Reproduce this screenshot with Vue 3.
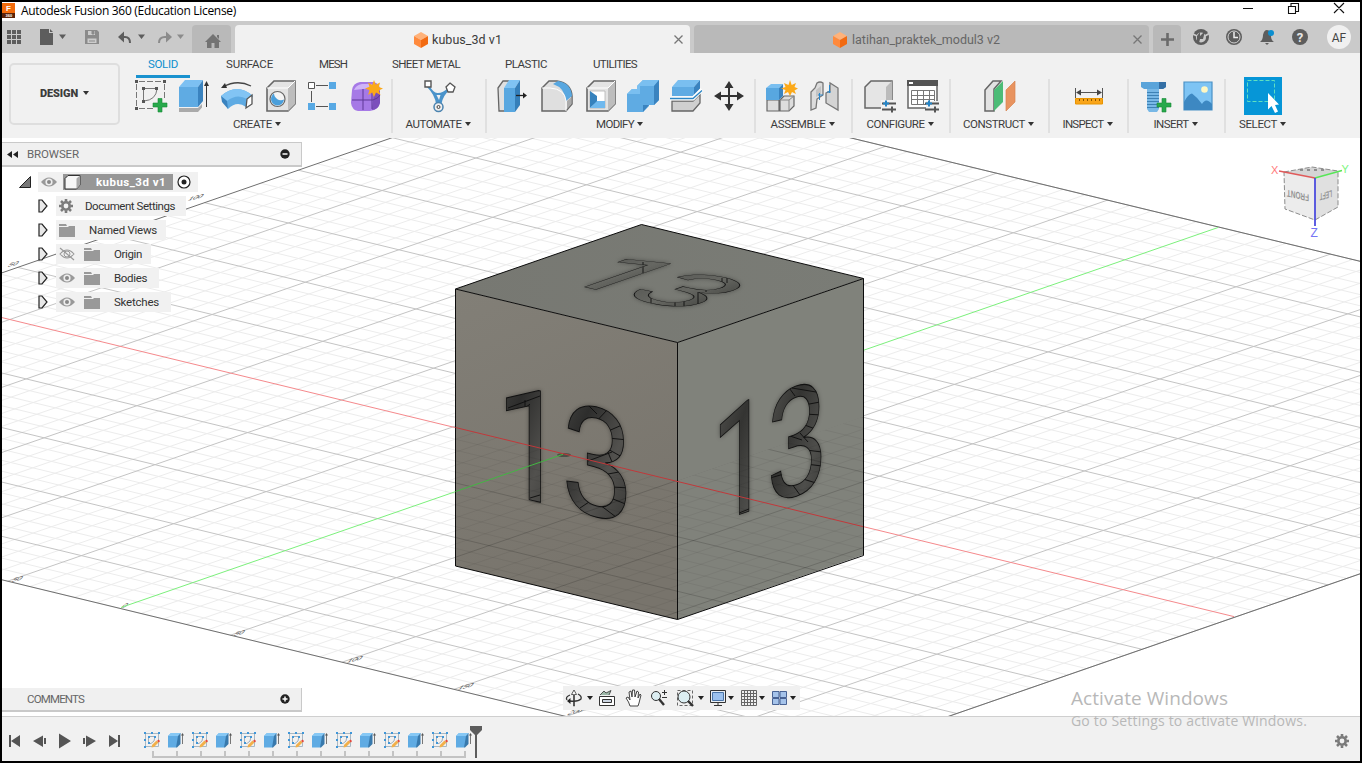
<script setup>
// v-fit="w" tracks the letters of a label so that it is w pixels wide.
const vFit = {
  mounted(el, { value }) {
    const w = el.getBoundingClientRect().width
    el.style.letterSpacing = (value - w) / el.textContent.length + 'px'
  },
}

const box = '<path d="M3 8 10 1H31V24L24 31H3z" fill="#e3e3e3" stroke="#666" stroke-width="1.6"/><path d="M24 8V31L31 24V1z" fill="#bdbdbd"/><path d="M3 8H24L31 1" fill="none" stroke="#fff"/>'
const icons = {
  sketch: '<g fill="none" stroke="#777"><path d="M4 1.500H28M1.500 4V27M4 28.500H19M29.500 4V18" stroke-dasharray="6 2"/><path d="M8.500 9V21M9 8.500H22M22 9Q21 20 9 21"/></g><path d="M0 0h3v3H0zM28 0h3v3h-3zM0 27h3v3H0zM7 7h3v3H7zM20 7h3v3h-3zM7 20h3v3H7z" fill="#555"/><path d="M23 18.500h4V23h5v4h-5v5h-4v-5h-5v-4h5z" fill="#27a94b" stroke="#178a38" stroke-width=".6"/>',
  extrude: '<path d="M1 28H20l4-4v3.500L20 32H1z" fill="#aaa"/><path d="M1 7 7 0H25L20 7z" fill="#7cc0f2"/><path d="M1 7H20V27H1z" fill="#5fabe3"/><path d="M20 7 25 0V21L20 27z" fill="#3a83bf"/><path d="M28.500 4V27" stroke="#333"/><path d="M26 6 28.500 1l2.500 5z" fill="#333"/>',
  revolve: '<path d="M2 7Q16-1 30 6" fill="none" stroke="#444" stroke-width="1.3"/><path d="M0 8 4 3l2 5z" fill="#333"/><path d="M0 16Q16 2 32 16L25 27Q16 20 7 29z" fill="#5fabe3"/><path d="M0 16Q16 2 32 16L26 19Q16 13 6 21z" fill="#82c4f4"/><path d="M0 16 6 21 7 29 1 22z" fill="#3a83bf"/><path d="M26 19 31 15V24L25 28z" fill="#fff" stroke="#555" stroke-width="1.3"/>',
  hole: box + '<circle cx="13.500" cy="19" r="7.500" fill="#f4f4f4" stroke="#666" stroke-width="1.2"/><path d="M10 13.500A6.500 6.500 0 1 0 20 19.500 7 7 0 0 1 10 13.500" fill="#4a9fdb"/>',
  pattern: '<path d="M9 5.500H21M4.500 11V22M9 26.500H21" stroke="#555"/><path d="M1.500 2.500h6v6h-6z" fill="#fff" stroke="#555"/><path d="M22 2h7v7h-7zM1 23h7v7H1zM22 23h7v7h-7z" fill="#58a9e4"/>',
  form: '<path d="M2 10Q3 3 10 2H23Q30 3 30 10V22Q29 30 20 31H8Q2 30 1 23z" fill="#a679e6"/><path d="M4 10Q6 5 12 4H22Q20 9 13 9z" fill="#cfb4f8"/><path d="M24 12Q30 9 30 12V23Q28 30 22 30z" fill="#7c4ebc"/><path d="M13 9V30M2 20H23Q29 18 30 15M22 9V29" fill="none" stroke="#5e3897"/><path d="M24 0l1.800 4.800L30 2.500 28.800 7 33 8.500 28.800 10.500 30.500 15 26 12.500 24 17l-1.800-4.500L18 15l1.500-4.700L15 8.500l4.500-1.700L18 2.500 22.200 5z" fill="#fba919"/>',
  automate: '<path d="M6 5Q11 14 15 13 20 13 25 8L27 10Q20 15 18.500 24H13Q12 15 4 7z" fill="#4a93ca"/><path d="M13.500 15h4L16 20z" fill="#f1f1f1"/><circle cx="15.500" cy="27" r="4.500" fill="#eee" stroke="#4a83af" stroke-width="1.500"/><circle cx="15.500" cy="27" r="1.500" fill="none" stroke="#444"/><path d="M2 1h6v6H2z" fill="#fff" stroke="#555" stroke-width="1.400"/><path d="m27 3 5 4-2 5h-5l-2-5z" fill="#fff" stroke="#555" stroke-width="1.300"/>',
  presspull: '<path d="M0 8 5 1h6V31H1z" fill="#e0e0e0" stroke="#666" stroke-width="1.300"/><path d="M6 8 11 0H22L17 8z" fill="#7fc3f3"/><path d="M6 8H17V32H6z" fill="#58a7e0"/><path d="M17 8 22 0V25L17 32z" fill="#357fb9"/><path d="M18 15.500H26" stroke="#222" stroke-width="1.300"/><path d="M25 12.500 29 15.500 25 18.500z" fill="#222"/>',
  fillet: '<path d="M1 8 8 1H16Q30 3 31 16V24L25 31H1z" fill="#dfdfdf" stroke="#666" stroke-width="1.500"/><path d="M12 4 17 1Q30 3 31 16L25 21Q24 8 12 4z" fill="#58a7e0"/><path d="M1 8H9Q24 9 25 21V31" fill="none" stroke="#fff"/><path d="M26 21 30.500 17v7L26 29z" fill="#aaa"/>',
  shell: box + '<path d="M6 11H21V28H6z" fill="#fff" stroke="#aaa" stroke-width=".7"/><path d="M6 11 13 16V22L6 28z" fill="#3682bd"/><path d="M6 28 13 21H21V28z" fill="#70b9ee"/>',
  combine: '<path d="M0 14 5 9H10V6L16 0H32V20L27 25H22V26L16 32H0z" fill="#5fabe3"/><path d="M0 14 5 9H10V6L16 0H32L27 6H13V14z" fill="#7abff0"/><path d="M27 6 32 0V20L27 25zM16 25H22L16 32z" fill="#3a83bf"/>',
  split: '<path d="M2 21H23L30 14V23L23 31H2z" fill="#cfcfcf" stroke="#666" stroke-width="1.300"/><path d="M2 7 8 0H30L24 7z" fill="#7abff0"/><path d="M2 7H24V16H2z" fill="#5fabe3"/><path d="M24 7 30 0V9L24 16z" fill="#3a83bf"/><path d="M0 18.500H23L32 9.500" fill="none" stroke="#fff" stroke-width="4"/><path d="M0 18.500H23L32 10.500" fill="none" stroke="#2c86c4" stroke-width="1.300"/>',
  move: '<path d="M16 5V27M5 16H27" stroke="#333" stroke-width="2"/><path d="M11.500 8 16 1 20.500 8zM11.500 24 16 31 20.500 24zM8 11.500 1 16 8 20.500zM24 11.500 31 16 24 20.500z" fill="#333"/>',
  assemble: '<path d="M1 20H13V31H1zM14 20 18 16H28V26L23 31H14z" fill="#ddd" stroke="#666" stroke-width="1.200"/><path d="M14 20H23V31M23 20 28 16" stroke="#888" fill="none"/><path d="M0 8 5 4H17L13 8z" fill="#7abff0"/><path d="M0 8H13V20H0z" fill="#58a7e0"/><path d="M13 8 17 4V16L13 20z" fill="#3a83bf"/><path d="M24 0l1.700 5L30 3 28.500 7 32 8.500 28.500 10.500 30 14 26 12 24 16 22 12 18 14 19.500 10 15 8.500 19.500 7 18 3 22.500 5z" fill="#fba919"/>',
  joint: '<path d="M2 12 6 8 8 3Q11 1 14 3V15L8 19 7 28 2 30z" fill="#dcdcdc" stroke="#777" stroke-width="1.300"/><path d="M7 10 12 6V14L7 17z" fill="#c4c4c4"/><path d="M17 13 21 11V3L29 8V30L17 23z" fill="#d4d4d4" stroke="#777" stroke-width="1.300"/><path d="M10.500 13V20M9 15h5M20.500 5V13M18 12h4" stroke="#2a86c9"/>',
  configure: '<path d="M1 7 7 1H28V22L22 28H1z" fill="#e5e5e5" stroke="#666" stroke-width="1.500"/><path d="M22 7 28 1V22L22 28z" fill="#bbb"/><path d="M17 20H33V33H17z" fill="#f1f1f1"/><path d="M18 23.500H32M18 29.500H32" stroke="#555" stroke-width="2"/><path d="M22 20.500v6M19 23.500h6" stroke="#2585c7" stroke-width="2"/><path d="M28 26.500v6" stroke="#555" stroke-width="2"/>',
  table: '<path d="M1 1H30V28H1z" fill="#fff" stroke="#666" stroke-width="1.500"/><path d="M0 0H31V6H0z" fill="#555"/><path d="M2 2h4v2H2z" fill="#fff"/><path d="M4.500 10.500H27.500V24.500H4.500zM4.500 15.500H27M4.500 19.500H27M10.500 10V24M16.500 10V24M22.500 10V24" fill="none" stroke="#777"/><path d="M19 21H33V33H19z" fill="#f1f1f1"/><path d="M18 23.500H32M18 29.500H32" stroke="#555" stroke-width="2"/><path d="M22 20.500v6M19 23.500h6" stroke="#2585c7" stroke-width="2"/><path d="M28 26.500v6" stroke="#555" stroke-width="2"/>',
  construct: '<path d="M1 10 9 1H17L10 9V31H1z" fill="#e2e2e2" stroke="#666" stroke-width="1.500"/><path d="M10 10 19 1V22L10 31z" fill="#4cbc77"/><path d="M22 10 31 1V22L22 31z" fill="#e8935f" stroke="#d98451" stroke-width=".7"/>',
  measure: '<path d="M2.500 8V18M29.500 8V18M4 12.500H28" stroke="#555"/><path d="M3 12.500 8 9.500V15.500zM29 12.500 24 9.500V15.500z" fill="#444"/><path d="M2.500 18.500H29.500V24H2.500z" fill="#f9a51a" stroke="#e89400"/><path d="M6.500 19v2M10.500 19v2M14.500 19v2M18.500 19v2M22.500 19v2M26.500 19v2" stroke="#8a5600"/>',
  bolt: '<path d="M8 8H20V29L18 32H10L8 29z" fill="#78b8e6"/><path d="M8 12.500H20M8 15.500H20M8 18.500H20M8 21.500H20M8 24.500H20M8 27.500H20" stroke="#3e82b5"/><path d="M2 2H27V7L24 9H5L2 7z" fill="#5aa4da"/><path d="M20 2H27V7L24 9H20z" fill="#346fa5"/><path d="M23 18.500h4V23h5v4h-5v5h-4v-5h-5v-4h5z" fill="#27a94b" stroke="#178a38" stroke-width=".6"/>',
  picture: '<path d="M2 2H30V30H2z" fill="#7ec4f4" stroke="#4a91c6" stroke-width="1.200"/><path d="M2 22Q6 14 10 13.500 15 17 20 24 24 17 30 24V30H2z" fill="#3d88c2"/><circle cx="22.500" cy="9.500" r="3.300" fill="#fff7c2"/>',
  select: '<path d="M0 0H38V38H0z" fill="#0696d7"/><path d="M3.500 3.500H30.500V24.500H3.500z" fill="none" stroke="#5fe0c0" stroke-dasharray="4 2"/><path d="M24 16V32.500L27.500 29 31 36 34 34.500 31 28 35 27.500z" fill="#fff"/>',
  tlsketch: '<path d="M1.500 1.500H14.500V14.500H1.500z" fill="none" stroke="#a9b8c3"/><path d="M4.500 4.500V11.500H7Q11 10 11 4.500z" fill="none" stroke="#8d9dab" stroke-width=".8"/><path d="M0 0h2v2H0zM14 0h2v2h-2zM0 14h2v2H0zM7 0h2v2H7zM0 7h2v2H0zM4 4h2v2H4zM10 4h2v2h-2zM4 10h2v2H4z" fill="#3f96d8"/><path d="m8 13 4.500-4.500 2 2L10 15l-2.500.5z" fill="#f2b04a"/><path d="m13 9 1.500-1.500L16 9l-1 1.500z" fill="#e5463a"/>',
  tlextrude: '<path d="M0 4 3 1H12L10 4V13L8 15.500H0z" fill="#5fabe3"/><path d="M0 4 3 1H13L10 4z" fill="#86c8f5"/><path d="M10 4 12.500 1V12L9 15.500H8z" fill="#3879ac"/><path d="M14.500 3V12" stroke="#777"/><path d="M13 3.500 14.500 1 16 3.500z" fill="#555"/>',
  eye: '<path d="M0 8Q8-1 16 8 8 17 0 8z" fill="#999"/><circle cx="8" cy="8" r="3.600" fill="#eee"/><circle cx="8" cy="8" r="2" fill="#888"/>',
  eyeoff: '<path d="M1 8Q8 0 15 8 8 16 1 8z" fill="none" stroke="#999" stroke-width="1.100"/><circle cx="8" cy="8" r="3" fill="none" stroke="#999"/><path d="M1 2 15 14" stroke="#999" stroke-width="1.200"/>',
  folder: '<path d="M0 2H7L8 4H0zM0 5H9L10 4H16V15H0z" fill="#999"/>',
  gear: '<circle cx="8" cy="8" r="3.700" fill="none" stroke="#7b7b7b" stroke-width="2.600"/><path d="M8 1V3.500M8 12.500V15M1 8H3.500M12.500 8H15M3 3 4.800 4.800M11.200 11.200 13 13M3 13 4.800 11.200M11.200 4.800 13 3" stroke="#7b7b7b" stroke-width="2.600"/>',
  cube: '<path d="M7 0 14 4 7 8 0 4z" fill="#ffb27a"/><path d="M0 4 7 8V16L0 12z" fill="#ff8a3d"/><path d="M14 4 7 8V16L14 12z" fill="#f26a11"/>',
}

const groups = [
  { name: 'CREATE', w: 268, t: 39, items: ['sketch', 'extrude', 'revolve', 'hole', 'pattern', 'form'] },
  { name: 'AUTOMATE', w: 94, t: 56, items: ['automate'] },
  { name: 'MODIFY', w: 269, t: 38, items: ['presspull', 'fillet', 'shell', 'combine', 'split', 'move'] },
  { name: 'ASSEMBLE', w: 97, t: 55, items: ['assemble', 'joint'] },
  { name: 'CONFIGURE', w: 98, t: 58, items: ['configure', 'table'] },
  { name: 'CONSTRUCT', w: 99, t: 62, items: ['construct'] },
  { name: 'INSPECT', w: 79, t: 41, items: ['measure'] },
  { name: 'INSERT', w: 97, t: 35, items: ['bolt', 'picture'] },
  { name: 'SELECT', w: 75, t: 38, items: ['select'] },
]
const modes = [['SOLID', 30], ['SURFACE', 47], ['MESH', 28], ['SHEET METAL', 68], ['PLASTIC', 42], ['UTILITIES', 44]]
const tree = [
  { label: 'Document Settings', icon: ['gear'], t: 90, w: 130, pad: 10 },
  { label: 'Named Views', icon: ['folder'], t: 68, w: 110, pad: 14 },
  { label: 'Origin', icon: ['eyeoff', 'folder'], t: 28, w: 95, pad: 14 },
  { label: 'Bodies', icon: ['eye', 'folder'], t: 33, w: 103, pad: 14 },
  { label: 'Sketches', icon: ['eye', 'folder'], t: 45, w: 115, pad: 14 },
]

// Ground grid: a runs along the red axis, b along the green one.
const pt = (a, b) => {
  const r = 111.4 * a + 0.1 * a * a
  const g = 93 * b + 0.1 * b * b
  return [563 + r + g, 454.3 + 0.2423 * r - 0.3464 * g]
}
const seg = (p, q) => `M${p[0].toFixed(1)} ${p[1].toFixed(1)}L${q[0].toFixed(1)} ${q[1].toFixed(1)}`
const A0 = -5.76, A1 = 6, B0 = -4.8, B1 = 7
let minor = '', major = ''
for (let i = -28; i <= 30; i++) {
  const s = seg(pt(i / 5, B0), pt(i / 5, B1))
  if (i % 5) minor += s
  else if (i) major += s
}
for (let i = -24; i <= 35; i++) {
  const s = seg(pt(A0, i / 5), pt(A1, i / 5))
  if (i % 5) minor += s
  else if (i) major += s
}
const border = [pt(A0, B0), pt(A1, B0), pt(A1, B1), pt(A0, B1)].map(p => p.join()).join(' ')
const marks = [[11, 582, '50'], [121, 608, '0'], [233, 636, '50'], [346, 663, '100'], [457, 690, '150'], [567, 715, '200'], [7, 267, '50'], [187, 201, '100']]
const faces = [
  { id: 'l', m1: 'matrix(.8 .191 0 1 492.500 491)', fill: 'url(#gl)', x: 4.5 },
  { id: 'r', m1: 'matrix(.673 -.2315 0 1 708.600 525)', fill: 'url(#gr)', x: 4.5 },
  { id: 't', m1: 'matrix(.8 .191 -.67 .232 547.500 278)', fill: 'url(#gt)', x: 5 },
]
const facets = {
  l: 'M525 400V414M508 408 540 396M506 424 530 404M587 404 597 414M607 410 593 425M622 425 606 432M628 440 608 438M622 457 606 448M605 445 612 462M588 461 612 452M630 470 608 474M630 488 612 487M628 505 608 497M616 517 600 505M580 508 592 500M530 498 540 495',
  r: 'M737 428 722 446M720 438 732 442M739 513 749 509M787 385 795 396M792 388 816 392M820 402 804 405M822 415 804 414M818 430 802 424M800 433 808 442M790 436 802 440M822 452 806 450M822 466 806 464M816 483 800 478M800 495 792 484M770 478 784 474',
  t: 'M643 262V273M618 262V265M651 288V303M675 296V306M698 293V306M706 288V292M722 278V288M727 276V283M684 300V306',
}
const steps = Array.from({ length: 14 }, (_, i) => (i % 2 ? 'tlextrude' : 'tlsketch'))
const ticks = Array.from({ length: 14 }, (_, i) => `M${1 + i * 24} 0V6`).join('') + 'M0 6H314'
</script>

<template>
  <div class="win">
    <header class="title">
      <svg class="logo" width="13" height="15" viewBox="0 0 13 15"><path d="M0 0H13V15H0z" fill="#f26b0c" /><path d="M0 10H13V15H0z" fill="#5c2207" /><text x="4" y="8" class="lf">F</text><text x="3.500" y="14" class="ls">360</text></svg>
      <span v-fit="215" class="name">Autodesk Fusion 360 (Education License)</span>
      <svg class="wb" width="102" height="12" fill="none" stroke="#111" stroke-width="1.1"><path d="M0 6.500H10M45.500 4.500H52.500V11.500H45.500zM48 4V1.500H55.500V9.500H53M91 1 101 11M101 1 91 11" /></svg>
    </header>

    <div class="tabs">
      <svg class="quick" width="190" height="32" viewBox="2 21 190 32">
        <path d="M7 30h4v4H7zM12 30h4v4h-4zM17 30h4v4h-4zM7 35h4v4H7zM12 35h4v4h-4zM17 35h4v4h-4zM7 40h4v4H7zM12 40h4v4h-4zM17 40h4v4h-4z" fill="#5d5d5d" />
        <path d="M40 29H49V33H53V45H40zM50 29 53 32H50z" fill="#5d5d5d" />
        <path d="M59 34.500h7L62.500 39zM138 34.500h7L141.500 39z" fill="#5d5d5d" />
        <path d="M177 34.500h7L180.500 39z" fill="#8b8b8b" />
        <path d="M85 30H97L99 32V44H85z" fill="#8b8b8b" /><path d="M88 31h7v4h-7zM87.500 38.500h9V43h-9z" fill="#ccc" /><path d="M92 31h2v3h-2zM89 41h6" fill="#8b8b8b" stroke="#8b8b8b" />
        <path d="M120 37H125Q130 37 130 43" fill="none" stroke="#5d5d5d" stroke-width="2" /><path d="M124 31.500V42.500L118 37z" fill="#5d5d5d" />
        <path d="M170 37H165Q159 37 159 43" fill="none" stroke="#8b8b8b" stroke-width="2" /><path d="M166 31.500V42.500L172 37z" fill="#8b8b8b" />
      </svg>
      <div class="tab home"><svg width="16" height="15" viewBox="0 0 16 15"><path d="M8 0 16 8H14V14H9.500V9H6.500V14H2V8H0zM12 1h2v4l-2-2z" fill="#737373" /></svg></div>
      <div class="tab on"><svg class="cb" width="14" height="16" v-html="icons.cube" /><span v-fit="70">kubus_3d v1</span><svg class="x" width="9" height="9"><path d="M.5.5 8.500 8.500M8.500.5.5 8.500" /></svg></div>
      <div class="tab off"><svg class="cb" width="14" height="16" v-html="icons.cube" /><span v-fit="148">latihan_praktek_modul3 v2</span><svg class="x" width="9" height="9"><path d="M.5.5 8.500 8.500M8.500.5.5 8.500" /></svg></div>
      <div class="tab plus"><svg width="13" height="13"><path d="M6.500 0V13M0 6.500H13" stroke="#6b6b6b" stroke-width="2.600" /></svg></div>
      <svg class="sys" width="172" height="32" viewBox="1188 21 172 32">
        <circle cx="1201" cy="37" r="8" fill="#5d5d5d" /><circle cx="1201" cy="37.500" r="5" fill="#cacaca" /><path d="M1192 33.500 1197 36M1204 36.500 1210 33" stroke="#cacaca" stroke-width="1.800" /><path d="M1197 43V36L1200 32 1200 36 1205 31 1203 39 1200 39 1199 43z" fill="#5d5d5d" />
        <circle cx="1234" cy="37" r="8" fill="#5d5d5d" /><circle cx="1234" cy="37" r="6" fill="none" stroke="#ddd" stroke-width=".9" /><path d="M1234 32V37.500H1238" fill="none" stroke="#eee" stroke-width="1.500" />
        <path d="M1260 42Q1263 40 1263 35 1264 30 1267 30 1271 30 1271 36 1271 40 1274 42zM1265 43h4l-2 2z" fill="#5d5d5d" /><circle cx="1271" cy="33" r="3" fill="#0c8fd0" />
        <circle cx="1300" cy="37" r="8" fill="#5d5d5d" /><text x="1300" y="42" class="q">?</text>
        <circle cx="1339" cy="37" r="12" fill="#f0f0f0" /><text x="1339" y="41.500" class="af">AF</text>
      </svg>
    </div>

    <div class="ribbon">
      <button class="design"><b v-fit="38">DESIGN</b><i class="car" /></button>
      <div class="main">
        <nav class="modes"><span v-for="(m, i) in modes" :key="m[0]" :class="{ cur: !i }"><em v-fit="m[1]">{{ m[0] }}</em></span></nav>
        <div class="groups">
          <section v-for="g in groups" :key="g.name" class="grp" :style="{ width: g.w + 'px' }">
            <div class="ics"><svg v-for="n in g.items" :key="n" :class="['ic', n]" v-html="icons[n]" /></div>
            <div class="lab"><span v-fit="g.t">{{ g.name }}</span><i class="car" /></div>
          </section>
        </div>
      </div>
    </div>

    <main class="canvas">
      <svg class="scene" width="1358" height="578" viewBox="2 138 1358 578">
        <defs>
          <linearGradient id="fl" x1="0" y1="0" x2=".3" y2="1"><stop offset="0" stop-color="#827f77" /><stop offset="1" stop-color="#78746c" /></linearGradient>
          <linearGradient id="fr" x1="0" y1="0" x2="0" y2="1"><stop offset="0" stop-color="#80827b" /><stop offset="1" stop-color="#80827b" /></linearGradient>
          <linearGradient id="ft" x1="0" y1="0" x2="1" y2="0"><stop offset="0" stop-color="#777872" /><stop offset="1" stop-color="#7a7c76" /></linearGradient>
          <linearGradient id="gl" x1="0" y1="0" x2="1" y2="1"><stop offset="0" stop-color="#4c4c49" /><stop offset=".3" stop-color="#2d2d2c" /><stop offset=".6" stop-color="#52514e" /><stop offset="1" stop-color="#2e2e2c" /></linearGradient>
          <linearGradient id="gr" x1="0" y1="0" x2="1" y2="1"><stop offset="0" stop-color="#5a5a56" /><stop offset=".4" stop-color="#343432" /><stop offset=".7" stop-color="#4e4e4b" /><stop offset="1" stop-color="#343432" /></linearGradient>
          <linearGradient id="gt" x1="0" y1="0" x2="1" y2="0"><stop offset="0" stop-color="#5a5b57" /><stop offset=".5" stop-color="#666762" /><stop offset="1" stop-color="#4a4b47" /></linearGradient>
          <filter id="soft" x="-20%" y="-20%" width="140%" height="140%"><feGaussianBlur stdDeviation="2" /></filter>
          <clipPath id="body"><path d="M455 427 677 481 863 417V555L677 619 455 566z" /></clipPath>
          <clipPath v-for="f in faces" :id="'c' + f.id" :key="f.id"><text :transform="f.m1" class="one" :x="f.x">1</text><text :transform="f.m1" class="three" x="87">3</text></clipPath>
        </defs>
        <path :d="minor" class="g1" /><path :d="major" class="g2" />
        <polygon :points="border" class="gb" />
        <text v-for="m in marks" :key="m[0]" :transform="`matrix(.95 -.22 -.6 .66 ${m[0]} ${m[1]})`" class="mk">{{ m[2] }}</text>
        <path d="M2 317.600 1234 616.600" stroke="#f5898c" /><path d="M121 607.500 1218 227.500" stroke="#7cf07c" />
        <path d="M641.500 224.500 863 278.500 677.500 342.500 455.500 289z" fill="url(#ft)" />
        <path d="M455.500 289 677.500 342.500V619.500L455.500 566z" fill="url(#fl)" />
        <path d="M677.500 342.500 863 278.500V555L677.500 619.500z" fill="url(#fr)" />
        <path d="M455.500 289 641.500 224.500 863.500 278.500V555.500L677.500 619.500 455.500 566zL677.500 342.500 863.500 278.500M677.500 342.500V619.500" fill="none" stroke="#0c0c0c" />
        <g v-for="f in faces" :key="f.id" :fill="f.fill" stroke="#111" class="cut"><text :transform="f.m1" class="one" :x="f.x">1</text><text :transform="f.m1" class="three" x="87">3</text></g>
        <path v-for="f in faces" :key="f.id" :d="facets[f.id]" :clip-path="`url(#c${f.id})`" stroke="#0d0d0d" stroke-width=".9" />
        <g clip-path="url(#body)"><path :d="minor" class="h1" /><path :d="major" class="h2" /></g>
        <ellipse cx="564" cy="455" rx="7" ry="2" fill="#4c5046" />
        <path d="M455.500 427.500 863 526.600" stroke="#c0393b" /><path d="M455.500 491.500 563 454.300" stroke="#43b643" />
        <g class="vc">
          <path d="M1284 172 1312 167 1338 171 1315 178z" fill="#d5d5d5" />
          <path d="M1284 172 1315 178V220L1285 209z" fill="#ececec" /><path d="M1315 178 1338 171V207L1315 220z" fill="#e0e0e0" />
          <path d="M1284 172 1312 167 1338 171V207L1315 220 1285 209z" fill="none" stroke="#8c8c8c" stroke-dasharray="5 2" />
          <path d="M1300 170h26" stroke="#777" stroke-width="1.500" stroke-dasharray="3 4" />
          <path d="M1279 171 1315 178" stroke="#e05a5a" stroke-width="1.500" /><path d="M1315 178 1342 170.500" stroke="#57e657" stroke-width="1.500" /><path d="M1315 178V226" stroke="#4343dd" stroke-width="1.700" />
          <text x="1271" y="174" fill="#ff7a7a">X</text><text x="1341.500" y="173" fill="#7df57d">Y</text><text x="1310.500" y="237" fill="#7575f5" class="z">Z</text>
          <text transform="matrix(-.68 -.15 0 -1.050 1309 194.500)" class="fc">FRONT</text><text transform="matrix(-.52 .16 0 -1.050 1332 190)" class="fc">LEFT</text>
        </g>
      </svg>

      <aside class="browser">
        <div class="bar"><svg width="11" height="7"><path d="M5 0V7L0 3.500zM11 0V7L6 3.500z" fill="#222" /></svg><span v-fit="52">BROWSER</span><svg class="pm" width="10" height="10"><circle cx="5" cy="5" r="4.700" fill="#222" /><path d="M2.500 5h5" stroke="#fff" stroke-width="1.500" /></svg></div>
        <div class="row root">
          <svg width="13" height="12"><path d="M11.500.5V11.500H.5z" fill="#777" stroke="#222" /></svg>
          <div class="rb"><svg class="s16" viewBox="0 0 16 16" v-html="icons.eye" />
            <span class="sel"><svg width="17" height="16"><path d="M1 4.500 4 1.500H16V11L12.500 15H1z" fill="#f7f7f7" stroke="#333" /><path d="M12.500 4.500V15L16 11V1.500z" fill="#aaa" /></svg><b v-fit="70">kubus_3d v1</b></span>
            <svg width="14" height="14"><circle cx="7" cy="7" r="6" fill="#fff" stroke="#222" stroke-width="1.200" /><circle cx="7" cy="7" r="2.500" fill="#222" /></svg></div>
        </div>
        <div v-for="r in tree" :key="r.label" class="row">
          <svg width="10" height="14"><path d="M1 1H4L9 7 4 13H1z" fill="#e8e8e8" stroke="#222" stroke-width="1.200" /></svg>
          <div class="rb" :style="{ width: r.w + 'px' }"><svg v-for="n in r.icon" :key="n" :class="['s16', n]" viewBox="0 0 16 16" v-html="icons[n]" /><span v-fit="r.t" :style="{ marginLeft: r.pad - 9 + 'px' }">{{ r.label }}</span></div>
        </div>
      </aside>

      <div class="bar comments"><span v-fit="57">COMMENTS</span><svg class="pm" width="10" height="10"><circle cx="5" cy="5" r="4.700" fill="#222" /><path d="M2.500 5h5M5 2.500v5" stroke="#fff" stroke-width="1.500" /></svg></div>

      <svg class="nav" width="237" height="24" viewBox="563 686 237 24">
        <path d="M563 686H800V710H563z" fill="#f0f0f0" />
        <g fill="none" stroke="#333">
          <path d="M573.500 706V694.500h-2l2.500-4.500 2.500 4.500h-2V706z" fill="#fff" stroke-width=".8" /><path d="M578 694Q582 696 581 699 578 702 570 701M570 695Q565 697 567 700" stroke-width="1.300" /><path d="M567 701l3.500-3v6z" fill="#222" stroke="none" />
          <path d="M599.500 696.500H614.500V705.500H599.500z" fill="#fff" /><path d="M602.500 699.500h9v3h-9z" fill="#cdd6e2" /><path d="M600 695 604 691 606 693 611 690.500 609 695" fill="#9db8a8" stroke-width=".8" />
          <path d="M630 706Q629 702 626 698L628 697 630 700 629 692 631 691 632 697 632.500 690 634.500 690 635 697 637 691 638.500 692 638 698 640 694 641 695 639 703 638 706z" fill="#fff" stroke-width=".9" />
          <circle cx="656" cy="696" r="4.500" fill="#dceef2" /><path d="M659 699 664 705" stroke-width="2.400" /><path d="M662 692.500h5M664.500 690v5M662 697.500h5" />
          <path d="M677.500 690.500H692.500V705.500H677.500z" stroke="#666" stroke-dasharray="3 2" /><circle cx="684" cy="697" r="6" fill="#dceef2" /><path d="M688 701 693 706" stroke-width="2.400" />
          <path d="M710.500 690.500H725.500V702.500H710.500z" fill="#e8eef4" /><path d="M712.500 692.500h11v8h-11z" fill="#9cc1ee" stroke="#4a74a8" /><path d="M714 705.500h8M718 703v3" />
          <path d="M741.500 690.500H756.500V705.500H741.500zM744.500 690V706M747.500 690V706M750.500 690V706M753.500 690V706M741 693.500H757M741 696.500H757M741 699.500H757M741 702.500H757" stroke="#666" />
          <path d="M772.500 691.500H779V697.500H772.500zM780 691.500H786.500V697.500H780zM772.500 698.500H779V704.500H772.500zM780 698.500H786.500V704.500H780z" fill="#a5c3ea" stroke="#3a568a" stroke-width=".9" />
        </g>
        <path v-for="x in [587, 698, 728, 759, 790]" :key="x" :d="`M${x} 696h6l-3 4z`" fill="#222" />
      </svg>
    </main>

    <footer class="time">
      <svg class="play" width="120" height="16" viewBox="6 733 120 16" fill="#555"><path d="M9 735h2v12H9zM20 735V747L11 741zM43 735.500V747L33 741zM44 738h2v6h-2zM59 733.500 71 741 59 748.500zM83 738h2v6h-2zM86 735.500V747L96 741zM109 735V747L118 741zM118 735h2v12h-2z" /></svg>
      <div class="steps"><div class="si"><svg v-for="(s, i) in steps" :key="i" width="17" height="16" v-html="icons[s]" /></div><svg width="314" height="8"><path :d="ticks" fill="none" stroke="#c3c3c3" stroke-width="2" /></svg></div>
      <svg class="mkr" width="12" height="32"><path d="M0 0H12V4L7 9V32H5V9L0 4z" fill="#5d5d5d" /></svg>
      <svg class="s16 set" viewBox="0 0 16 16" v-html="icons.gear" />
    </footer>

    <div class="wm"><p><span v-fit="157">Activate Windows</span></p><small><span v-fit="236">Go to Settings to activate Windows.</span></small></div>
  </div>
</template>

<style>
body { background: #000; overflow: hidden; }
</style>
<style scoped>
.win { position: relative; box-sizing: border-box; width: 1362px; height: 763px; padding: 2px; background: #000; display: flex; flex-direction: column; font: 12px Roboto, "Liberation Sans", sans-serif; color: #3c3c3c; overflow: hidden; }
svg { display: block; flex: none; overflow: visible; }
svg.scene { overflow: hidden; }
span, b, em { display: inline-block; white-space: nowrap; font-style: normal; }
.title { height: 19px; background: #fff; display: flex; align-items: center; color: #000; font-family: "Open Sans", sans-serif; }
.name { margin-left: 6px; font-size: 12px; line-height: 17px; margin-top: -3px; }
.logo { margin-bottom: 3px; }
.lf { font: bold 8px "Liberation Sans", sans-serif; fill: #fff; }
.ls { font: bold 4px "Liberation Sans", sans-serif; fill: #fff; }
.wb { margin-left: auto; margin-right: 15px; margin-bottom: 7px; }
.tabs { height: 32px; background: #cacaca; display: flex; align-items: flex-end; }
.tab { height: 28px; background: #b9b9b9; border-radius: 4px 4px 0 0; display: flex; align-items: center; margin-right: 4px; box-sizing: border-box; font-size: 12.5px; }
.home { width: 39px; justify-content: center; padding-top: 4px; padding-left: 3px; }
.on { width: 455px; background: #f1f1f1; padding-left: 179px; }
.on .cb { margin-right: 4px; }
.off { width: 455px; padding-left: 139px; color: #666; }
.cb { margin: 1px 5px 0 0; }
.x { margin-left: auto; margin-right: 7px; stroke: #777; stroke-width: 1.3; }
.plus { width: 28px; justify-content: center; margin-right: 7px; }
.q { font: bold 13px Roboto, sans-serif; fill: #e6e6e6; text-anchor: middle; }
.af { font: 12px Roboto, sans-serif; fill: #444; text-anchor: middle; }
.ribbon { height: 85px; background: #f1f1f1; display: flex; flex: none; }
.design { width: 111px; height: 62px; margin: 10px 0 0 7px; border: 2px solid #dedede; border-radius: 5px; background: none; display: flex; align-items: center; justify-content: center; font: bold 11px Roboto, sans-serif; color: #3c3c3c; padding: 0 0 2px; }
.car { display: inline-block; border: 3px solid transparent; border-top: 4px solid #333; border-bottom: 0; margin-left: 5px; }
.main { margin-left: 4px; }
.modes { display: grid; grid-template-columns: 54px 119px 48px 138px 62px 116px; margin-left: 12px; height: 23px; font-size: 11.5px; }
.modes span { text-align: center; line-height: 22px; box-sizing: border-box; }
.cur { color: #0d8fce; border-bottom: 3px solid #1a92cf; }
.groups { display: flex; height: 58px; margin-left: 1px; }
.grp { height: 58px; display: flex; flex-direction: column; box-sizing: border-box; }
.grp:not(:last-child) { border-right: 2px solid #e0e0e0; height: 54px; margin-top: 3px; }
.grp:last-child { margin-top: 3px; }
.ics { display: flex; justify-content: center; gap: 11px; height: 32px; padding-top: 1px; }
.ic { width: 32px; height: 32px; }
.presspull { margin-left: 2px; }
.select { width: 38px; height: 38px; margin: -3px 1px 0 0; }
.lab { display: flex; align-items: center; justify-content: center; margin: 5px 2px 0 0; height: 14px; font-size: 11.5px; }
.lab .car { margin-left: 3px; }
.canvas { position: relative; height: 578px; background: #fff; flex: none; }
.g1, .g2, .gb, .h1, .h2 { fill: none; }
.g1 { stroke: #ececec; } .g2 { stroke: #c4c4c4; } .gb { stroke: #6f6f6f; }
.h1 { stroke: #000; stroke-opacity: .055; } .h2 { stroke: #000; stroke-opacity: .16; }
.mk { font: 9px "Liberation Sans", sans-serif; fill: #444; }
.cut { filter: drop-shadow(0 0 2px rgba(0, 0, 0, .35)); }
.one { font: 156px Roboto, sans-serif; }
.three { font: 156px "Liberation Sans", sans-serif; }
.vc text { font: 11px "Liberation Sans", sans-serif; }
.vc .z { font-size: 12px; }
.vc .fc { font-size: 9.5px; font-weight: bold; fill: #949494; }
.browser { position: absolute; left: 0; top: 4px; font-size: 11.5px; }
.bar { width: 299px; height: 22px; background: #f0f0f0; border: solid #c9c9c9; border-width: 1px 1px 2px 0; display: flex; align-items: center; color: #666; font-size: 11.5px; }
.browser .bar { padding-left: 5px; width: 294px; margin-bottom: 3px; }
.bar span { margin-left: 9px; }
.pm { margin-left: auto; margin-right: 11px; }
.row { height: 24px; display: flex; align-items: center; padding-left: 36px; }
.root { padding-left: 17px; }
.rb { height: 20px; background: #f1f1f1; display: flex; align-items: center; gap: 9px; padding-left: 3px; margin-left: 8px; box-sizing: border-box; color: #333; }
.root .rb { width: 160px; gap: 6px; margin-left: 6px; }
.root .rb > svg:last-child { margin-left: -2px; }
.s16 { width: 16px; height: 16px; }
.rb .gear { margin: 0 1px 0 -1px; }
.sel { background: #979797; width: 110px; height: 16px; display: flex; align-items: center; color: #fff; }
.sel svg { margin-left: 1px; }
.sel b { margin-left: 15px; }
.comments { position: absolute; left: 0; bottom: 4px; border-top: 0; }
.comments span { margin-left: 25px; }
.nav { position: absolute; left: 561px; top: 548px; }
.time { height: 45px; box-sizing: border-box; background: #f1f1f1; border-top: 1px solid #cfcfcf; display: flex; align-items: flex-start; }
.play { margin: 16px 0 0 4px; }
.steps { margin: 15px 0 0 18px; }
.si { display: flex; gap: 7px; }
.steps > svg { margin: 3px 0 0 8px; }
.mkr { margin: 9px 0 0 -3px; }
.set { margin: 16px 10px 0 auto; }
.wm { position: absolute; left: 1071px; top: 686px; color: #b8b8b8; font-family: "Open Sans", sans-serif; }
.wm p { margin: 0; font-size: 19px; line-height: 25px; }
.wm small { display: block; font-size: 14px; line-height: 20px; }
</style>
